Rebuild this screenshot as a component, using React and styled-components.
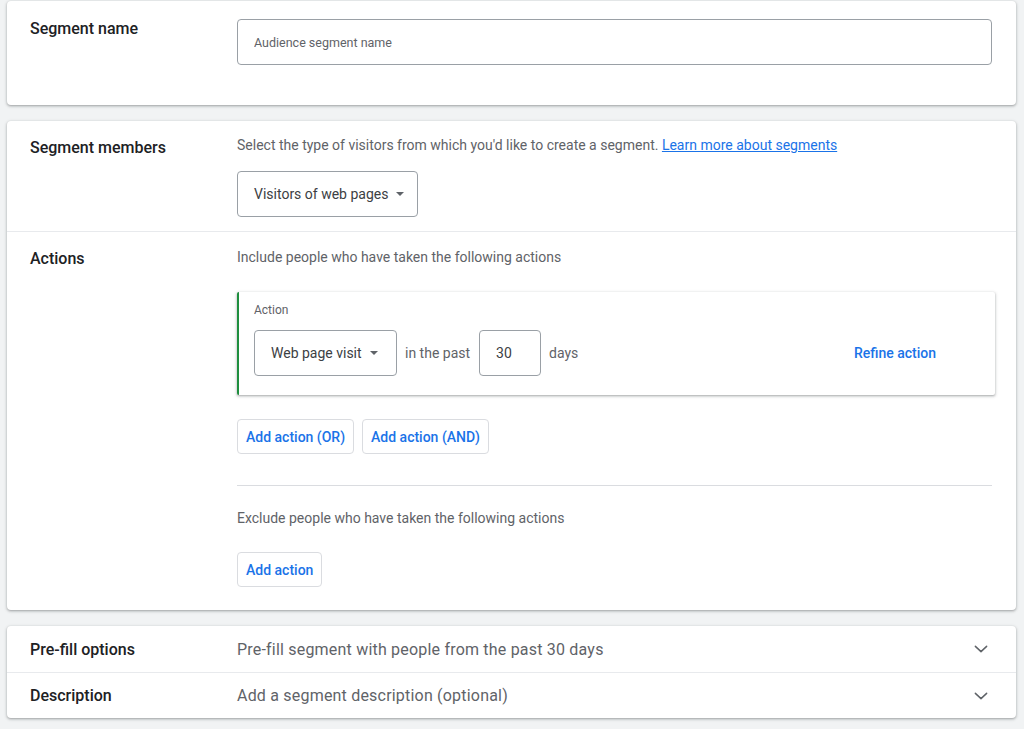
import React from "react";
import styled, { createGlobalStyle } from "styled-components";

const GlobalStyle = createGlobalStyle`
  body {
    margin: 0;
    background: #f1f3f4;
    font-family: Roboto, "Liberation Sans", Arial, sans-serif;
    color: #202124;
  }
`;

const ChevronDown = () => (
  <svg width="18" height="18" viewBox="0 0 24 24" fill="none">
    <path d="M4.5 8.5l7.5 7 7.5-7" stroke="#5f6368" strokeWidth="2" strokeLinecap="round" strokeLinejoin="round" />
  </svg>
);

const App = () => {
  return (
    <>
      <GlobalStyle />
      <Page>
        <Card>
          <Row pad="18px 24px 40px 23px">
            <Label top="0px">Segment name</Label>
            <Content>
              <NameInput placeholder="Audience segment name" />
            </Content>
          </Row>
        </Card>

        <Card>
          <Row pad="15px 24px 14px 23px" divided>
            <Label top="2px">Segment members</Label>
            <Content>
              <HelpText>
                Select the type of visitors from which you'd like to create a segment.{" "}
                <LearnLink href="#">Learn more about segments</LearnLink>
              </HelpText>
              <Spacer h="17px" />
              <Select w="181px">
                Visitors of web pages <Caret />
              </Select>
            </Content>
          </Row>
          <Row pad="16px 24px 23px 23px">
            <Label top="1px">Actions</Label>
            <Content>
              <HelpText>Include people who have taken the following actions</HelpText>
              <Spacer h="26px" />
              <ActionCard>
                <ActionTitle>Action</ActionTitle>
                <ActionLine>
                  <Select w="143px">
                    Web page visit <Caret />
                  </Select>
                  <InlineText>in the past</InlineText>
                  <DaysBox>30</DaysBox>
                  <InlineText>days</InlineText>
                  <RefineLink>Refine action</RefineLink>
                </ActionLine>
              </ActionCard>
              <Spacer h="24px" />
              <ButtonRow>
                <OutlineButton>Add action (OR)</OutlineButton>
                <OutlineButton>Add action (AND)</OutlineButton>
              </ButtonRow>
              <Divider />
              <HelpText>Exclude people who have taken the following actions</HelpText>
              <Spacer h="25px" />
              <ButtonRow>
                <OutlineButton>Add action</OutlineButton>
              </ButtonRow>
            </Content>
          </Row>
        </Card>

        <Card>
          <CollapsedRow h="46px">
            <CollapsedLabel>Pre-fill options</CollapsedLabel>
            <CollapsedValue>Pre-fill segment with people from the past 30 days</CollapsedValue>
            <ChevronDown />
          </CollapsedRow>
          <CollapsedRow h="45px" divided>
            <CollapsedLabel>Description</CollapsedLabel>
            <CollapsedValue>Add a segment description (optional)</CollapsedValue>
            <ChevronDown />
          </CollapsedRow>
        </Card>
      </Page>
    </>
  );
};

export default App;

const Page = styled.div`
  display: flex;
  flex-direction: column;
  gap: 16px;
  padding: 1px 8px 12px 7px;
`;

const Card = styled.div`
  background: #fff;
  border-radius: 4px;
  box-shadow: 0 1px 2px rgba(60, 64, 67, 0.3), 0 1px 3px 1px rgba(60, 64, 67, 0.15);
`;

const Row = styled.div`
  display: flex;
  padding: ${(p) => p.pad};
  border-bottom: ${(p) => (p.divided ? "1px solid #e8eaed" : "none")};
`;

const Label = styled.div`
  width: 207px;
  flex-shrink: 0;
  padding-top: ${(p) => p.top};
  font-size: 16px;
  font-weight: 500;
  line-height: 20px;
  color: #202124;
`;

const Content = styled.div`
  flex: 1;
  display: flex;
  flex-direction: column;
  align-items: flex-start;
`;

const Spacer = styled.div`
  height: ${(p) => p.h};
`;

const NameInput = styled.input`
  width: 100%;
  box-sizing: border-box;
  height: 46px;
  border: 1px solid #9aa0a6;
  border-radius: 4px;
  padding: 0 16px;
  font-family: Roboto, "Liberation Sans", Arial, sans-serif;
  font-size: 12.5px;
  color: #202124;
  outline: none;
  &::placeholder {
    color: #5f6368;
  }
`;

const HelpText = styled.div`
  font-size: 14px;
  color: #5f6368;
  line-height: 18px;
`;

const LearnLink = styled.a`
  color: #1a73e8;
  text-decoration: underline;
`;

const Select = styled.div`
  width: ${(p) => p.w};
  box-sizing: border-box;
  height: 46px;
  display: flex;
  align-items: center;
  gap: 6px;
  padding: 0 16px;
  border: 1px solid #9aa0a6;
  border-radius: 4px;
  font-size: 14px;
  color: #3c4043;
  white-space: nowrap;
`;

const Caret = styled.span`
  width: 0;
  height: 0;
  margin-left: 2px;
  border-left: 4.5px solid transparent;
  border-right: 4.5px solid transparent;
  border-top: 4.5px solid #5f6368;
`;

const ActionCard = styled.div`
  align-self: stretch;
  margin-right: -3px;
  padding: 11px 0 19px 15px;
  border-left: 2px solid #1e8e3e;
  border-radius: 2px;
  box-shadow: 0 1px 2px rgba(60, 64, 67, 0.3), 0 1px 3px 1px rgba(60, 64, 67, 0.15);
  background: #fff;
`;

const ActionTitle = styled.div`
  font-size: 12px;
  color: #5f6368;
  line-height: 14px;
  margin-bottom: 13px;
`;

const ActionLine = styled.div`
  display: flex;
  align-items: center;
  gap: 8px;
`;

const InlineText = styled.span`
  font-size: 14px;
  color: #5f6368;
`;

const DaysBox = styled.div`
  width: 62px;
  height: 46px;
  margin-left: 1px;
  box-sizing: border-box;
  display: flex;
  align-items: center;
  padding-left: 16px;
  border: 1px solid #9aa0a6;
  border-radius: 4px;
  font-size: 14px;
  color: #3c4043;
`;

const RefineLink = styled.span`
  margin-left: auto;
  margin-right: 59px;
  font-size: 14px;
  font-weight: 500;
  color: #1a73e8;
`;

const ButtonRow = styled.div`
  display: flex;
  gap: 8px;
`;

const OutlineButton = styled.button`
  height: 35px;
  padding: 0 8px;
  background: #fff;
  border: 1px solid #dadce0;
  border-radius: 4px;
  font-family: Roboto, "Liberation Sans", Arial, sans-serif;
  font-size: 14px;
  font-weight: 500;
  color: #1a73e8;
`;

const Divider = styled.div`
  align-self: stretch;
  height: 1px;
  background: #dadce0;
  margin: 31px 0 23px;
`;

const CollapsedRow = styled.div`
  display: flex;
  align-items: center;
  height: ${(p) => p.h};
  padding: 0 26px 0 23px;
  border-top: ${(p) => (p.divided ? "1px solid #e8eaed" : "none")};
`;

const CollapsedLabel = styled.div`
  width: 207px;
  font-size: 16px;
  font-weight: 500;
  color: #202124;
`;

const CollapsedValue = styled.div`
  flex: 1;
  font-size: 16px;
  letter-spacing: 0.2px;
  color: #5f6368;
`;
